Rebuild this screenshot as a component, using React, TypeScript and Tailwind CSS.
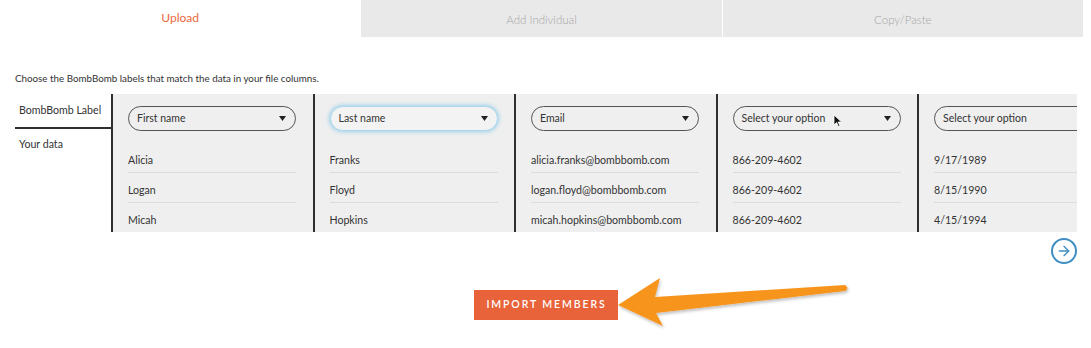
import React from "react";
import { ArrowRight } from "lucide-react";

const columns = [
  { label: "First name", values: ["Alicia", "Logan", "Micah"] },
  { label: "Last name", values: ["Franks", "Floyd", "Hopkins"], focused: true },
  {
    label: "Email",
    values: [
      "alicia.franks@bombbomb.com",
      "logan.floyd@bombbomb.com",
      "micah.hopkins@bombbomb.com",
    ],
  },
  {
    label: "Select your option",
    values: ["866-209-4602", "866-209-4602", "866-209-4602"],
    cursor: true,
  },
  { label: "Select your option", values: ["9/17/1989", "8/15/1990", "4/15/1994"] },
];

const Caret = () => (
  <svg width="7" height="5" viewBox="0 0 7 5" className="shrink-0">
    <path d="M0 0h7L3.5 5z" fill="#222" />
  </svg>
);

const Cursor = () => (
  <svg width="9" height="13" viewBox="0 0 9 13" className="ml-2 -mb-1">
    <path d="M1 1v10l2.6-2.4 1.8 3.9 1.5-.7-1.8-3.8H8.6z" fill="#111" stroke="#fff" strokeWidth="0.8" />
  </svg>
);

const Column = ({
  label,
  values,
  focused,
  cursor,
}: {
  label: string;
  values: string[];
  focused?: boolean;
  cursor?: boolean;
}) => (
  <div className="w-[201.5px] shrink-0 border-l-2 border-[#2e2e2e] bg-[#efefef] pl-[15px] pt-[12px]">
    <div
      className={
        "flex h-[25px] w-[168px] items-center justify-between rounded-full pl-[8px] pr-[9px] text-[10.5px] text-[#333] " +
        (focused
          ? "border border-[#a9d6ec] bg-[#f3f3f3] shadow-[0_0_4px_1px_#9fd1ea]"
          : "border border-[#555] bg-[#efefef]")
      }
    >
      <span className="flex items-center">
        {label}
        {cursor && <Cursor />}
      </span>
      <Caret />
    </div>
    <div className="mt-[12px] w-[168px]">
      {values.map((v) => (
        <div
          key={v}
          className="h-[30px] border-b border-[#dcdcdc] pt-[11px] text-[10.6px] leading-[13px] text-[#333]"
        >
          {v}
        </div>
      ))}
    </div>
  </div>
);

const OrangeArrow = () => (
  <svg
    className="pointer-events-none absolute left-0 top-0"
    width="1091"
    height="348"
    viewBox="0 0 1091 348"
  >
    <defs>
      <filter id="sh" x="-10%" y="-30%" width="120%" height="160%">
        <feDropShadow dx="1" dy="2" stdDeviation="1.5" floodColor="#000" floodOpacity="0.25" />
      </filter>
    </defs>
    <path
      d="M618 305 L660 278 L655 297 L845 285 Q850 288 845 291 L656 313 L663 326 Z"
      fill="#f7941e"
      filter="url(#sh)"
    />
  </svg>
);

export default function App() {
  return (
    <div
      className="relative h-[348px] w-[1091px] overflow-hidden bg-white"
      style={{ fontFamily: "Lato, 'Open Sans', sans-serif" }}
    >
      <div className="grid h-[37px] w-[1083px] grid-cols-3 gap-px">
        <div className="flex items-center justify-center pb-[2px] text-[12px] text-[#e8683d]">
          Upload
        </div>
        <div className="flex items-center justify-center bg-[#e9e9e9] pt-[2px] text-[11.5px] font-light text-[#a6a6a6]">
          Add Individual
        </div>
        <div className="flex items-center justify-center bg-[#e9e9e9] pt-[2px] text-[11.5px] font-light text-[#a6a6a6]">
          Copy/Paste
        </div>
      </div>

      <p className="ml-[15px] mt-[35px] text-[9.8px] leading-[12px] text-[#333]">
        Choose the BombBomb labels that match the data in your file columns.
      </p>

      <div className="ml-[15px] mt-[10px] flex h-[138px] w-[1062px] overflow-hidden">
        <div className="w-[96px] shrink-0 text-[10.6px] text-[#333]">
          <div className="border-b-2 border-[#2e2e2e] pb-[8px] pl-[4px] pt-[9px]">
            BombBomb Label
          </div>
          <div className="pl-[4px] pt-[8px]">Your data</div>
        </div>
        {columns.map((c, i) => (
          <Column key={i} {...c} />
        ))}
      </div>

      <div className="flex w-[1077px] justify-end pt-[6px]">
        <ArrowRight
          className="box-content rounded-full border-2 border-[#3d8ec2] p-[3px] text-[#3d8ec2]"
          size={16}
          strokeWidth={2}
        />
      </div>

      <div className="mt-[26px] flex justify-center">
        <button className="h-[30px] w-[144px] bg-[#e8623a] pl-[2px] text-[10.5px] font-semibold tracking-[0.18em] text-white">
          IMPORT MEMBERS
        </button>
      </div>

      <OrangeArrow />
    </div>
  );
}
